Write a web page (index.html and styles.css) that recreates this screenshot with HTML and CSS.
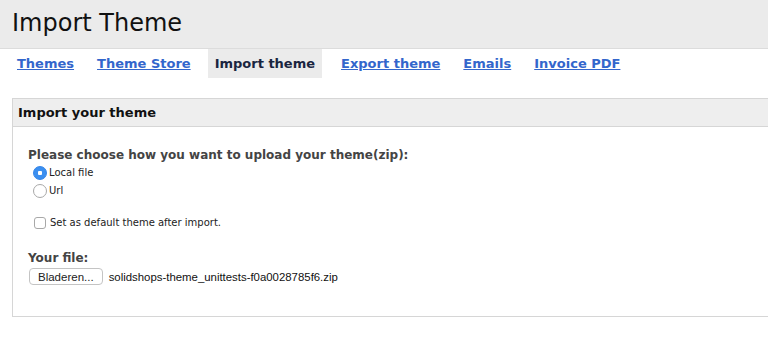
FILE: index.html
```html
<!DOCTYPE html>
<html lang="en">
<head>
    <meta charset="UTF-8">
    <meta name="viewport" content="width=device-width, initial-scale=1.0">
    <title>Import Theme</title>
    <link rel="stylesheet" href="styles.css">
</head>
<body>
    <header class="page-header">
        <h1>Import Theme</h1>
    </header>

    <nav class="tabs">
        <a href="#">Themes</a>
        <a href="#">Theme Store</a>
        <a href="#" class="active">Import theme</a>
        <a href="#">Export theme</a>
        <a href="#">Emails</a>
        <a href="#">Invoice PDF</a>
    </nav>

    <section class="panel">
        <h2 class="panel-title">Import your theme</h2>
        <div class="panel-body">
            <p class="label">Please choose how you want to upload your theme(zip):</p>
            <label class="option"><input type="radio" name="source" checked> Local file</label>
            <label class="option"><input type="radio" name="source"> Url</label>

            <label class="option check"><input type="checkbox"> Set as default theme after import.</label>

            <p class="label file-label">Your file:</p>
            <div class="file-row">
                <button type="button">Bladeren...</button>
                <span class="file-name">solidshops-theme_unittests-f0a0028785f6.zip</span>
            </div>
        </div>
    </section>
</body>
</html>
```

FILE: styles.css
```css
html, body {
    overflow: hidden;
}

body {
    font-family: "DejaVu Sans", Verdana, sans-serif;
    margin: 0;
    padding: 0;
    background-color: #ffffff;
    color: #222;
}

.page-header {
    background-color: #ebebeb;
    border-bottom: 1px solid #dcdcdc;
    height: 48px;
    padding: 0 12px;
}

.page-header h1 {
    margin: 0;
    font-size: 24px;
    font-weight: normal;
    line-height: 46px;
    color: #111;
}

.tabs {
    display: flex;
    gap: 9px;
    padding-left: 10px;
    height: 29px;
}

.tabs a {
    font-size: 13px;
    font-weight: bold;
    line-height: 30px;
    padding: 0 7px;
    color: #3366cc;
    text-decoration: underline;
}

.tabs a.active {
    background-color: #ebebeb;
    color: #1a2540;
    text-decoration: none;
    margin: 0 3px 0 1px;
}

.panel {
    margin: 20px -20px 0 12px;
    border: 1px solid #d6d6d6;
}

.panel-title {
    margin: 0;
    background-color: #eeeeee;
    border-bottom: 1px solid #d6d6d6;
    font-size: 13px;
    line-height: 26px;
    padding: 1px 5px 0;
    color: #111;
}

.panel-body {
    padding: 19px 15px 31px;
}

.label {
    margin: 0;
    font-size: 12px;
    font-weight: bold;
    line-height: 18px;
    color: #444;
}

.option {
    display: flex;
    align-items: center;
    gap: 2px;
    font-size: 10px;
    line-height: 18px;
    color: #222;
    padding-left: 5px;
}

.option input {
    appearance: none;
    margin: 0;
    width: 14px;
    height: 14px;
    border: 1px solid #a8a8a8;
    background: #fff;
}

.option input[type="radio"] {
    border-radius: 50%;
}

.option input[type="radio"]:checked {
    background: radial-gradient(circle, #fff 0 2px, #3b8ff0 2.5px);
    border-color: #3083e8;
}

.option input[type="checkbox"] {
    width: 12px;
    height: 12px;
    border-radius: 3px;
    margin: 0 2px 0 1px;
}

.check {
    margin-top: 14px;
}

.file-label {
    margin-top: 17px;
}

.file-row {
    display: flex;
    align-items: center;
    gap: 6px;
    margin-top: 1px;
    padding-left: 1px;
}

.file-row button {
    font-family: "Liberation Sans", Arial, sans-serif;
    font-size: 11.5px;
    height: 17px;
    padding: 0 8px;
    border: 1px solid #c4c4c4;
    border-radius: 4px;
    background: #fff;
    color: #222;
}

.file-name {
    font-family: "Liberation Sans", Arial, sans-serif;
    font-size: 11.4px;
    color: #111;
}
```
